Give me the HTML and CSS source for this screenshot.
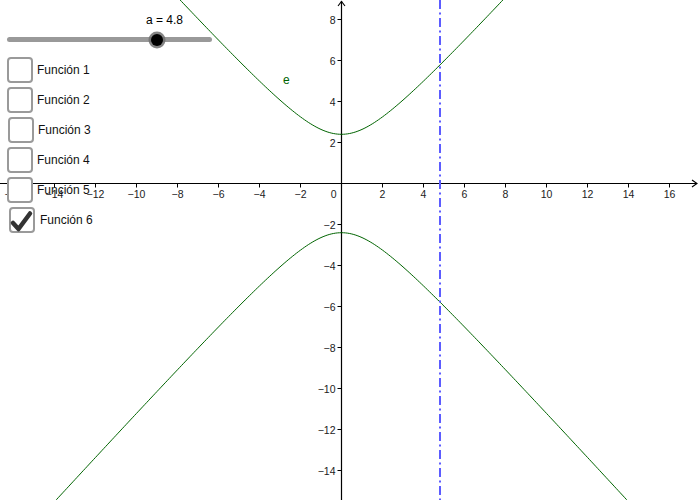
FILE: index.html
```html
<!DOCTYPE html>
<html>
<head>
<meta charset="utf-8">
<link rel="stylesheet" href="styles.css">
</head>
<body>
<div class="stage">
  <svg id="graph" class="graph" width="700" height="500" viewBox="0 0 700 500">
    <g id="ticks"></g>
    <line class="axis" x1="0" y1="183.5" x2="697" y2="183.5"></line>
    <polyline class="axis-arrow" points="692,180 697,183.5 692,187"></polyline>
    <line class="axis" x1="341.5" y1="1" x2="341.5" y2="500"></line>
    <polyline class="axis-arrow" points="338,6 341.5,1.5 345,6"></polyline>
    <path id="curveTop" class="curve" d=""></path>
    <path id="curveBottom" class="curve" d=""></path>
    <line class="vline" x1="440" y1="0" x2="440" y2="500"></line>
    <text class="curve-label" x="283" y="84">e</text>
  </svg>

  <div class="controls">
    <div class="slider">
      <div class="slider-label">a = 4.8</div>
      <div class="slider-track"><span class="slider-knob" style="left:144px"></span></div>
    </div>
    <ul class="checks">
      <li class="check"><span class="box"></span><span class="check-label">Función 1</span></li>
      <li class="check"><span class="box"></span><span class="check-label">Función 2</span></li>
      <li class="check check-shift1"><span class="box"></span><span class="check-label">Función 3</span></li>
      <li class="check"><span class="box"></span><span class="check-label">Función 4</span></li>
      <li class="check"><span class="box"></span><span class="check-label">Función 5</span></li>
      <li class="check check-shift2"><span class="box box-checked"><svg class="tick-mark" viewBox="0 0 26 26" width="26" height="26"><polyline points="4,16 9.5,22 21,6.5"></polyline></svg></span><span class="check-label">Función 6</span></li>
    </ul>
  </div>
</div>
<script src="script.js"></script>
</body>
</html>
```

FILE: styles.css
```css
html, body {
  margin: 0;
  padding: 0;
  background: #fff;
}

.stage {
  position: relative;
  width: 700px;
  height: 500px;
  overflow: hidden;
  background: #fff;
  font-family: "Liberation Sans", Arial, sans-serif;
}

.graph {
  position: absolute;
  left: 0;
  top: 0;
}

.axis {
  stroke: #000;
  stroke-width: 1.2;
}

.axis-arrow {
  fill: none;
  stroke: #000;
  stroke-width: 1.1;
}

.tick {
  stroke: #000;
  stroke-width: 1;
}

.lbl {
  font-family: "Liberation Sans", Arial, sans-serif;
  font-size: 10.5px;
  fill: #222;
}

.lbl-x {
  text-anchor: middle;
}

.lbl-y {
  text-anchor: end;
}

.curve {
  fill: none;
  stroke: #006400;
  stroke-width: 1;
}

.vline {
  stroke: #5c5cff;
  stroke-width: 2;
  stroke-dasharray: 9 3.5 2 3.5;
}

.curve-label {
  font-family: "Liberation Sans", Arial, sans-serif;
  font-size: 12px;
  fill: #006400;
}

.controls {
  position: absolute;
  left: 0;
  top: 0;
  width: 230px;
}

.slider-label {
  padding-top: 13px;
  margin-left: 146px;
  font-size: 12px;
  line-height: 14px;
  color: #000;
}

.slider-track {
  position: relative;
  margin-top: 10px;
  margin-left: 7px;
  width: 205px;
  height: 5px;
  border-radius: 3px;
  background: #999;
}

.slider-knob {
  position: absolute;
  top: -3.5px;
  width: 12px;
  height: 12px;
  border-radius: 50%;
  background: #000;
  box-shadow: 0 0 0 2.5px rgba(110, 110, 110, 0.85);
}

.checks {
  list-style: none;
  margin: 15px 0 0 0;
  padding: 0;
  display: flex;
  flex-direction: column;
  gap: 4px;
}

.check {
  display: flex;
  align-items: center;
  gap: 4px;
  height: 26px;
  padding-left: 7px;
}

.check-shift1 {
  padding-left: 8px;
}

.check-shift2 {
  padding-left: 9px;
  gap: 5px;
}

.box {
  position: relative;
  box-sizing: border-box;
  width: 26px;
  height: 26px;
  border: 2px solid #9a9a9a;
  border-radius: 4px;
  background: #fff;
  flex: none;
}

.tick-mark {
  position: absolute;
  left: -2px;
  top: -2px;
}

.tick-mark polyline {
  fill: none;
  stroke: #333;
  stroke-width: 4.5;
  stroke-linecap: round;
  stroke-linejoin: round;
}

.check-label {
  font-size: 12px;
  color: #111;
  line-height: 14px;
}
```

FILE: script.js
```js
(function () {
  var NS = 'http://www.w3.org/2000/svg';
  var ox = 341.5, oy = 183.5, s = 20.5;
  var ticks = document.getElementById('ticks');

  function el(tag, attrs, text) {
    var e = document.createElementNS(NS, tag);
    for (var k in attrs) e.setAttribute(k, attrs[k]);
    if (text !== undefined) e.textContent = text;
    ticks.appendChild(e);
    return e;
  }
  function fmt(n) {
    return n < 0 ? '\u2212' + Math.abs(n) : String(n);
  }

  for (var i = -16; i <= 16; i += 2) {
    if (i === 0) continue;
    var px = ox + i * s;
    el('line', { x1: px, y1: oy, x2: px, y2: oy + 4, 'class': 'tick' });
    el('text', { x: px, y: oy + 14.5, 'class': 'lbl lbl-x' }, fmt(i));
  }
  for (var j = -14; j <= 8; j += 2) {
    if (j === 0) continue;
    var py = oy - j * s;
    el('line', { x1: ox - 4, y1: py, x2: ox, y2: py, 'class': 'tick' });
    el('text', { x: ox - 6, y: py + 4, 'class': 'lbl lbl-y' }, fmt(j));
  }
  el('text', { x: ox - 5, y: oy + 14.5, 'class': 'lbl lbl-y' }, '0');

  function curve(sign) {
    var d = '';
    for (var x = -20; x <= 20.001; x += 0.1) {
      var y = sign * Math.sqrt(5.76 + 1.2 * x * x);
      var X = ox + x * s, Y = oy - y * s;
      d += (d ? ' L' : 'M') + X.toFixed(2) + ' ' + Y.toFixed(2);
    }
    return d;
  }
  document.getElementById('curveTop').setAttribute('d', curve(1));
  document.getElementById('curveBottom').setAttribute('d', curve(-1));
})();
```
